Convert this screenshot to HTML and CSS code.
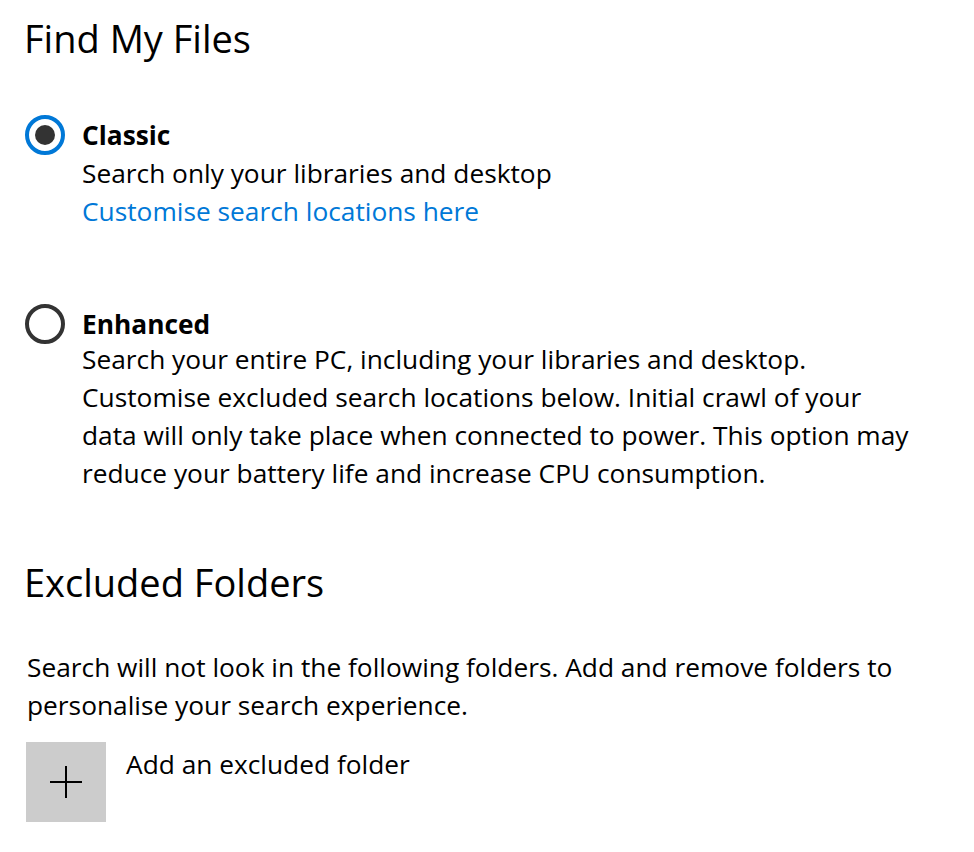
FILE: index.html
```html
<!DOCTYPE html>
<html>
  <head>
    <title>Searching Windows</title>
    <link rel="stylesheet" href="styles.css">
  </head>
  <body>
    <div class="page">
      <h1 class="title">Find My Files</h1>

      <div class="option">
        <span class="radio checked"></span>
        <div class="option-text">
          <p class="option-name">Classic</p>
          <p class="option-desc">Search only your libraries and desktop</p>
          <a href="#" class="link">Customise search locations here</a>
        </div>
      </div>

      <div class="option enhanced">
        <span class="radio"></span>
        <div class="option-text">
          <p class="option-name">Enhanced</p>
          <p class="option-desc">Search your entire PC, including your libraries and desktop. Customise excluded search locations below. Initial crawl of your data will only take place when connected to power. This option may reduce your battery life and increase CPU consumption.</p>
        </div>
      </div>

      <h2 class="title sub">Excluded Folders</h2>

      <p class="info">Search will not look in the following folders. Add and remove folders to personalise your search experience.</p>

      <div class="add-row">
        <button class="add-btn">
          <svg width="34" height="34" viewBox="0 0 34 34">
            <path d="M1 17H33M17 1V33" stroke="#000" stroke-width="2" fill="none"/>
          </svg>
        </button>
        <span class="add-label">Add an excluded folder</span>
      </div>
    </div>
  </body>
</html>
```

FILE: styles.css
```css
body{
  margin: 0;
  background-color: white;
  color: black;
  font-family: "Open Sans", "Noto Sans", sans-serif;
}

.page{
  padding: 12px 0 0 24px;
  font-size: 26.3px;
  line-height: 38px;
}

p{
  margin: 0;
}

.title{
  font-size: 38px;
  font-weight: normal;
  line-height: 52px;
  margin: 0;
}

.sub{
  margin-top: 64px;
}

.option{
  display: flex;
  align-items: flex-start;
  margin-top: 52px;
}

.option.enhanced{
  margin-top: 75px;
}

.option.enhanced .option-desc{
  margin-top: -3px;
  width: 840px;
}

.radio{
  box-sizing: border-box;
  width: 40px;
  height: 40px;
  margin: -1px 17px 0 1px;
  border: 4px solid #333;
  border-radius: 50%;
  display: flex;
  align-items: center;
  justify-content: center;
  flex-shrink: 0;
}

.radio.checked{
  border-color: #0078d7;
}

.radio.checked::after{
  content: "";
  width: 20px;
  height: 20px;
  border-radius: 50%;
  background-color: #333;
}

.option-name{
  font-weight: bold;
}

.link{
  color: #0078d7;
  text-decoration: none;
}

.info{
  margin: 40px 0 0 3px;
  width: 900px;
}

.add-row{
  display: flex;
  align-items: flex-start;
  margin: 18px 0 0 2px;
}

.add-btn{
  width: 80px;
  height: 80px;
  border: none;
  padding: 0;
  background-color: #ccc;
  display: flex;
  align-items: center;
  justify-content: center;
}

.add-label{
  margin: 3px 0 0 20px;
}
```
